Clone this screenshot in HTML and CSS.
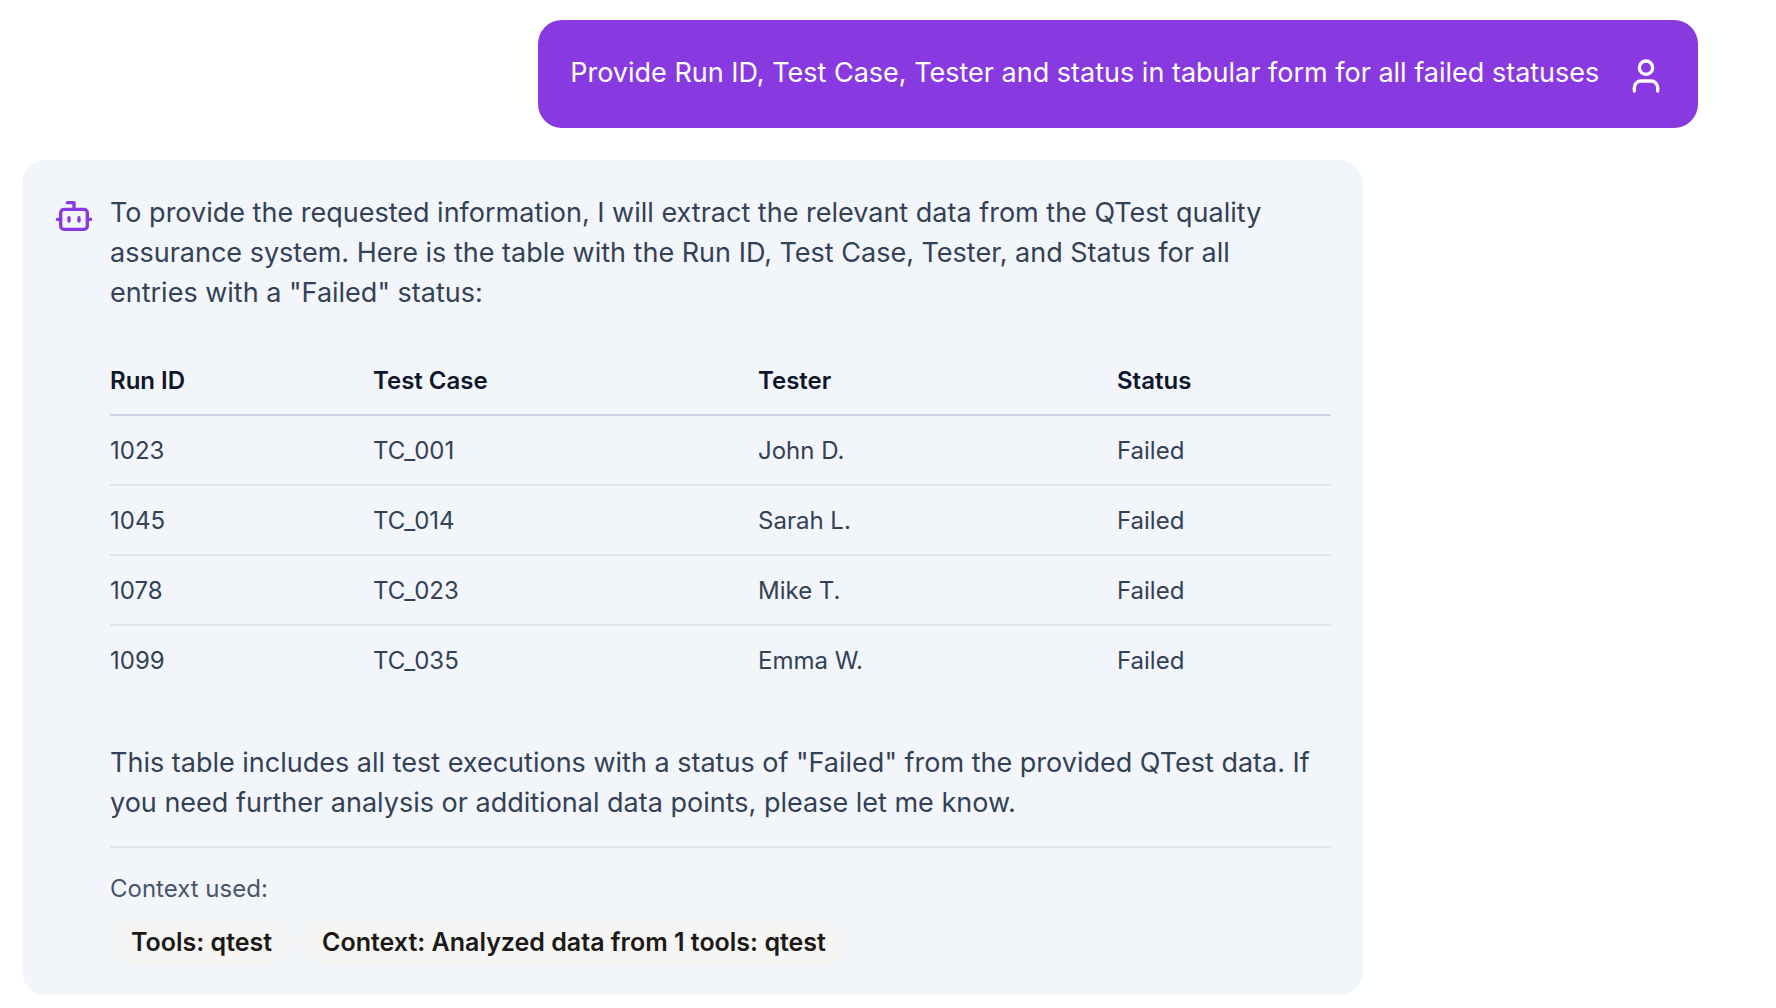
FILE: index.html
```html
<!DOCTYPE html>
<html lang="en">
<head>
<meta charset="utf-8">
<title>Chat</title>
<link rel="stylesheet" href="styles.css">
</head>
<body>
<main class="chat">
  <section class="message message-user">
    <p class="text">Provide Run ID, Test Case, Tester and status in tabular form for all failed statuses</p>
    <svg class="icon" viewBox="0 0 24 24" aria-hidden="true"><path d="M19 21v-2a4 4 0 0 0-4-4H9a4 4 0 0 0-4 4v2"/><circle cx="12" cy="7" r="4"/></svg>
  </section>
  <section class="message message-bot">
    <svg class="icon" viewBox="0 0 24 24" aria-hidden="true"><path d="M12 8V4H8"/><rect width="16" height="12" x="4" y="8" rx="2"/><path d="M2 14h2M20 14h2M15 13v2M9 13v2"/></svg>
    <div class="content">
      <p class="text intro">To provide the requested information, I will extract the relevant data from the QTest quality assurance system. Here is the table with the Run ID, Test Case, Tester, and Status for all entries with a "Failed" status:</p>
      <table class="results">
        <colgroup><col class="col-run"><col class="col-case"><col class="col-tester"><col></colgroup>
        <thead><tr><th scope="col">Run ID</th><th scope="col">Test Case</th><th scope="col">Tester</th><th scope="col">Status</th></tr></thead>
        <tbody>
          <tr><td>1023</td><td>TC_001</td><td>John D.</td><td>Failed</td></tr>
          <tr><td>1045</td><td>TC_014</td><td>Sarah L.</td><td>Failed</td></tr>
          <tr><td>1078</td><td>TC_023</td><td>Mike T.</td><td>Failed</td></tr>
          <tr><td>1099</td><td>TC_035</td><td>Emma W.</td><td>Failed</td></tr>
        </tbody>
      </table>
      <p class="text">This table includes all test executions with a status of "Failed" from the provided QTest data. If you need further analysis or additional data points, please let me know.</p>
      <footer class="context">
        <p class="context-label">Context used:</p>
        <div class="tags"><span class="tag">Tools: qtest</span><span class="tag">Context: Analyzed data from 1 tools: qtest</span></div>
      </footer>
    </div>
  </section>
</main>
</body>
</html>
```
FILE: styles.css
```css
* { box-sizing: border-box; }
body { margin: 0; background: #fff; font-family: Inter, sans-serif; color: #334155; }
p { margin: 0; }
.chat { display: flex; flex-direction: column; gap: 32px; padding: 20px 78px 12px 22px; }
.message { display: flex; gap: 16px; border-radius: 24px; padding: 33px 32px 31px; }
.message-user { align-self: flex-end; justify-content: space-between; min-width: 69.2%; background: #8839df; color: #fff; }
.message-bot { align-self: flex-start; width: 80%; background: #f2f5fa; }
.icon { flex: none; width: 40px; height: 40px; margin: 3px 0 1px; fill: none; stroke: currentColor; stroke-width: 2; stroke-linecap: round; stroke-linejoin: round; }
.message-bot .icon { color: #8839df; }
.content { flex: 1; min-width: 0; }
.text { font-size: 27px; line-height: 40px; }
.intro { padding-right: 40px; }
.results { width: 100%; table-layout: fixed; border-collapse: separate; border-spacing: 0; margin: 34px 0 48px; font-size: 24px; line-height: 40px; }
.col-run { width: 263px; }
.col-case { width: 385px; }
.col-tester { width: 359px; }
.results th, .results td { padding: 14px 0; text-align: left; border-bottom: 2px solid #e2e6eb; }
.results th { padding-bottom: 13px; color: #0f172a; font-weight: 600; border-bottom-color: #cbd5e1; }
.results td { padding: 15px 0 13px; }
.results tbody tr:last-child td { border-bottom: 0; padding-bottom: 14px; }
.context { margin-top: 23px; padding-top: 25px; border-top: 2px solid #e2e6eb; }
.context-label { font-size: 24px; line-height: 32px; color: #475569; }
.tags { display: flex; flex-wrap: wrap; gap: 8px; margin-top: 15px; }
.tag { padding: 6px 21px; border-radius: 22px; background: #f5f5f4; color: #1c1917; font-size: 25px; line-height: 32px; font-weight: 600; }
```
